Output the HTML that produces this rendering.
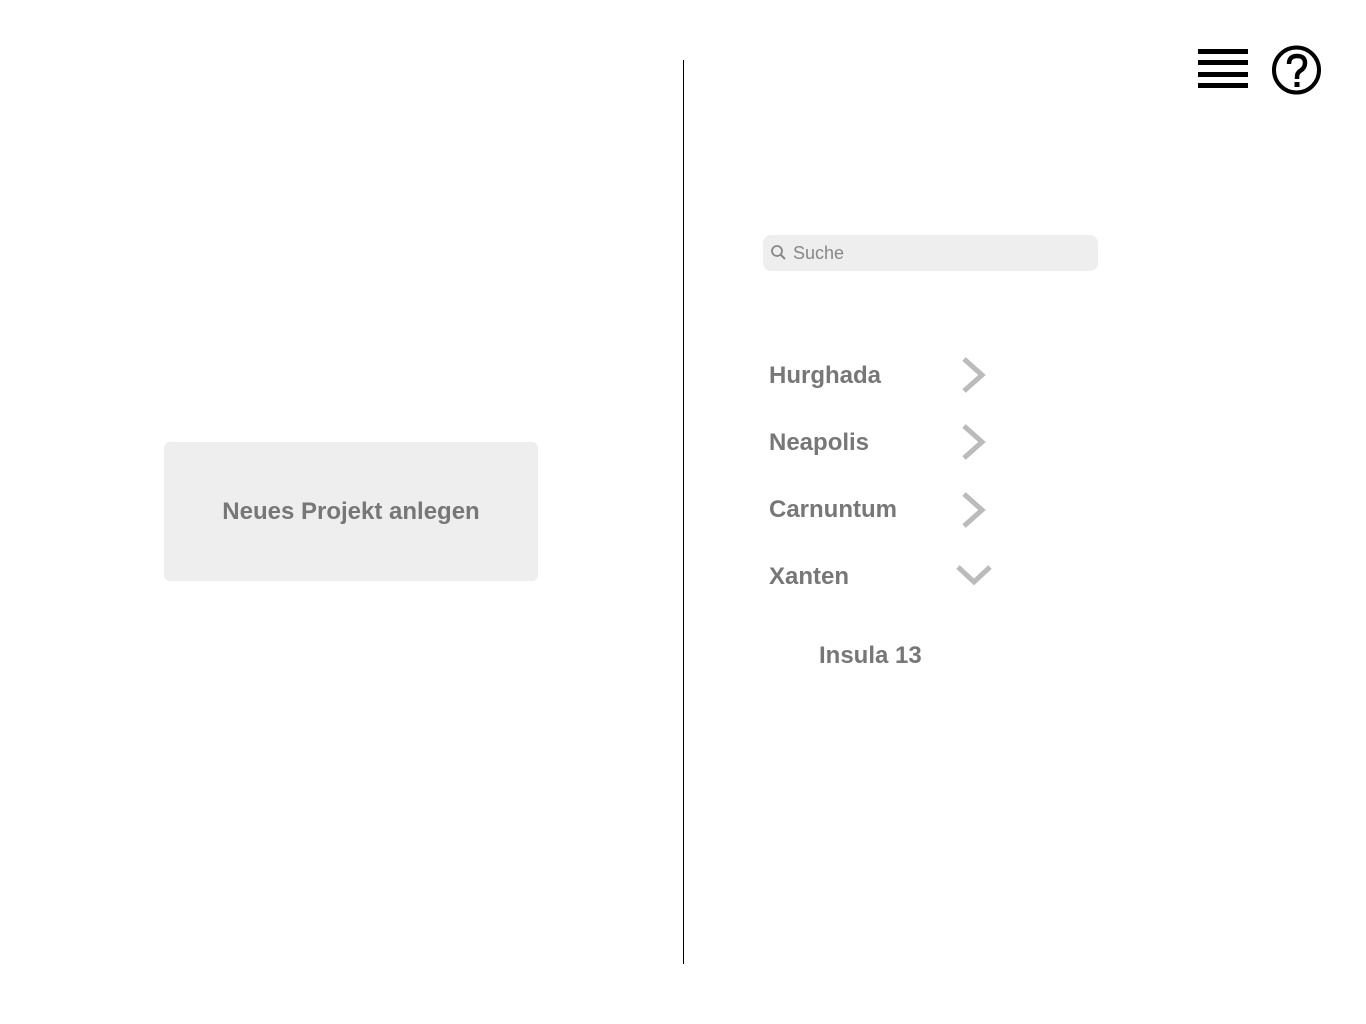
<!DOCTYPE html>
<html><head><style>
body{margin:0;width:1366px;height:1024px;background:#fff;position:relative;font-family:"Liberation Sans",sans-serif;overflow:hidden}
.a{position:absolute}
.item{position:absolute;left:769px;font-size:24px;font-weight:bold;color:#777;letter-spacing:0px}
</style></head><body>
<div class="a" style="left:683px;top:60px;width:1px;height:904px;background:#000"></div>
<div class="a" style="left:1198px;top:49px;width:50px;height:5px;background:#000"></div>
<div class="a" style="left:1198px;top:60px;width:50px;height:5px;background:#000"></div>
<div class="a" style="left:1198px;top:72px;width:50px;height:5px;background:#000"></div>
<div class="a" style="left:1198px;top:83px;width:50px;height:5px;background:#000"></div>
<svg class="a" style="left:1270px;top:44px" width="54" height="52" viewBox="0 0 54 52">
<circle cx="26.5" cy="26" r="22.5" fill="none" stroke="#000" stroke-width="4"/>
<path d="M19 20 Q19 12 27 12 Q35 12 35 19 Q35 24 30 27 Q27 29 27 33 V35" fill="none" stroke="#000" stroke-width="4.5"/>
<rect x="24.5" y="38" width="5" height="5" fill="#000"/>
</svg>
<div class="a" style="left:164px;top:442px;width:374px;height:139px;background:#eee;border-radius:6px;display:flex;align-items:center;justify-content:center;font-size:24px;font-weight:bold;color:#777;letter-spacing:0px">Neues Projekt anlegen</div>
<div class="a" style="left:763px;top:235px;width:335px;height:36px;background:#eee;border-radius:8px"></div>
<svg class="a" style="left:770px;top:244px" width="18" height="18" viewBox="0 0 18 18"><circle cx="7" cy="7" r="5" fill="none" stroke="#888" stroke-width="1.8"/><path d="M10.5 10.5 L15 15" stroke="#888" stroke-width="2"/></svg>
<div class="a" style="left:793px;top:243px;font-size:18px;color:#888">Suche</div>
<div class="item" style="top:362px">Hurghada</div>
<div class="item" style="top:429px">Neapolis</div>
<div class="item" style="top:496px">Carnuntum</div>
<div class="item" style="top:563px">Xanten</div>
<div class="item" style="left:819px;top:642px">Insula 13</div>
<svg class="a" style="left:955px;top:355px" width="40" height="240" viewBox="0 0 40 240">
<g fill="none" stroke="#bbb" stroke-width="5">
<path d="M9 4 L27 20 L9 36"/>
<path d="M9 71 L27 87 L9 103"/>
<path d="M9 139 L27 155 L9 171"/>
<path d="M3 212 L19 227 L35 212"/>
</g></svg>
</body></html>
